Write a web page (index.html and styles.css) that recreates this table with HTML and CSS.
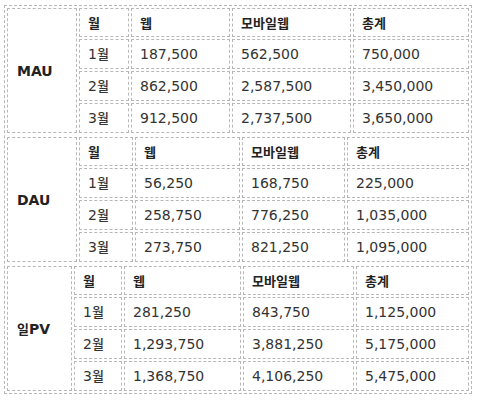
FILE: index.html
```html
<!DOCTYPE html>
<html lang="ko">
<head>
<meta charset="utf-8">
<title>MAU / DAU / 일PV</title>
<link rel="stylesheet" href="styles.css">
</head>
<body>
<table class="outer">
  <tr>
    <td class="wrap">
      <table class="grp g1">
        <colgroup><col class="c0"><col class="c1"><col class="c2"><col class="c3"><col class="c4"></colgroup>
        <tr class="head"><th rowspan="4" class="name">MAU</th><th><span class="ko">월</span></th><th><span class="ko">웹</span></th><th><span class="ko">모바일웹</span></th><th><span class="ko">총계</span></th></tr>
        <tr><td>1<span class="ko">월</span></td><td>187,500</td><td>562,500</td><td>750,000</td></tr>
        <tr><td>2<span class="ko">월</span></td><td>862,500</td><td>2,587,500</td><td>3,450,000</td></tr>
        <tr><td>3<span class="ko">월</span></td><td>912,500</td><td>2,737,500</td><td>3,650,000</td></tr>
      </table>
    </td>
  </tr>
  <tr>
    <td class="wrap">
      <table class="grp g2">
        <colgroup><col class="c0"><col class="c1"><col class="c2"><col class="c3"><col class="c4"></colgroup>
        <tr class="head"><th rowspan="4" class="name">DAU</th><th><span class="ko">월</span></th><th><span class="ko">웹</span></th><th><span class="ko">모바일웹</span></th><th><span class="ko">총계</span></th></tr>
        <tr><td>1<span class="ko">월</span></td><td>56,250</td><td>168,750</td><td>225,000</td></tr>
        <tr><td>2<span class="ko">월</span></td><td>258,750</td><td>776,250</td><td>1,035,000</td></tr>
        <tr><td>3<span class="ko">월</span></td><td>273,750</td><td>821,250</td><td>1,095,000</td></tr>
      </table>
    </td>
  </tr>
  <tr>
    <td class="wrap">
      <table class="grp g3">
        <colgroup><col class="c0"><col class="c1"><col class="c2"><col class="c3"><col class="c4"></colgroup>
        <tr class="head"><th rowspan="4" class="name"><span class="ko">일</span>PV</th><th><span class="ko">월</span></th><th><span class="ko">웹</span></th><th><span class="ko">모바일웹</span></th><th><span class="ko">총계</span></th></tr>
        <tr><td>1<span class="ko">월</span></td><td>281,250</td><td>843,750</td><td>1,125,000</td></tr>
        <tr><td>2<span class="ko">월</span></td><td>1,293,750</td><td>3,881,250</td><td>5,175,000</td></tr>
        <tr><td>3<span class="ko">월</span></td><td>1,368,750</td><td>4,106,250</td><td>5,475,000</td></tr>
      </table>
    </td>
  </tr>
</table>
</body>
</html>
```
FILE: styles.css
```css
html, body {
  background: #ffffff;
}
body {
  margin: 5px 0 0 4px;
  font-family: "DejaVu Sans", Verdana, sans-serif;
  font-size: 14px;
  color: #333333;
}
.outer {
  width: 468px;
  border: 1px dashed #b8b8b8;
  border-spacing: 0;
  border-collapse: separate;
}
.wrap {
  padding: 0;
}
.grp {
  width: 466px;
  table-layout: fixed;
  border-collapse: separate;
  border-spacing: 2px;
}
.grp th,
.grp td {
  border: 1px dashed #b8b8b8;
  padding: 4px 0 4px 8px;
  line-height: 20px;
  text-align: left;
  white-space: nowrap;
}
.grp th {
  font-weight: bold;
  color: #222222;
}
.grp .head th {
  padding-top: 4px;
  padding-bottom: 3px;
}
.grp th.name {
  vertical-align: middle;
  padding-left: 9px;
}
.ko {
  font-family: "Noto Sans CJK KR", "DejaVu Sans", sans-serif;
  font-size: 13px;
  font-weight: 500;
}
.grp th .ko {
  font-weight: bold;
}
.g1 .c0 { width: 70px; }
.g1 .c1 { width: 50px; }
.g1 .c2 { width: 99px; }
.g1 .c3 { width: 119px; }
.g1 .c4 { width: 116px; }
.g2 .c0 { width: 70px; }
.g2 .c1 { width: 54px; }
.g2 .c2 { width: 105px; }
.g2 .c3 { width: 103px; }
.g2 .c4 { width: 122px; }
.g3 .c0 { width: 65px; }
.g3 .c1 { width: 48px; }
.g3 .c2 { width: 117px; }
.g3 .c3 { width: 111px; }
.g3 .c4 { width: 113px; }
```
